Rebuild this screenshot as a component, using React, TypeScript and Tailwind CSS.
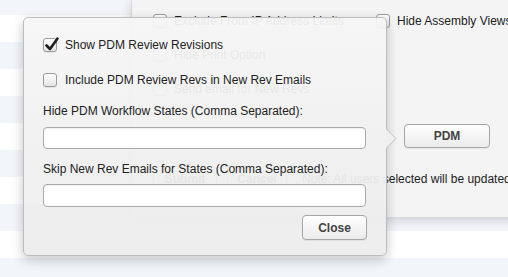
import React from 'react';

const stripes = [15, 27, 27, 27, 27, 27, 27, 27, 27, 27, 27];

function Checkbox({ checked = false }: { checked?: boolean }) {
  return (
    <span className="relative block w-[14px] h-[14px] shrink-0 rounded-[3px] border border-[#9c9c9c] bg-gradient-to-b from-white to-[#e4e4e4] shadow-[0_1px_1px_rgba(0,0,0,0.08)]">
      {checked && (
        <svg className="absolute -left-[1px] -top-[3px]" width="17" height="17" viewBox="0 0 17 17">
          <path d="M3.5 9.5 L7 13 L14.5 2.5" fill="none" stroke="#1e1e1e" strokeWidth="2.6" strokeLinecap="round" strokeLinejoin="round" />
        </svg>
      )}
    </span>
  );
}

function MacButton({ label, className }: { label: string; className: string }) {
  return (
    <div
      className={`flex items-center justify-center rounded-[4px] border border-[#a6a6a6] bg-gradient-to-b from-white to-[#ebebeb] shadow-[0_1px_1px_rgba(0,0,0,0.06)] text-[12px] font-bold text-[#444] ${className}`}
    >
      {label}
    </div>
  );
}

function BackOption({ label }: { label: string }) {
  return (
    <div className="flex items-center gap-[7px] h-[14px]">
      <Checkbox />
      <span className="text-[12px] text-[#222] whitespace-nowrap">{label}</span>
    </div>
  );
}

export default function App() {
  return (
    <div className="relative w-[508px] h-[277px] overflow-hidden bg-white font-['Liberation_Sans',Arial,sans-serif]">
      {/* page rows */}
      <div className="flex flex-col">
        {stripes.map((h, i) => (
          <div key={i} className={i % 2 === 0 ? 'bg-[#f2f6fa]' : 'bg-white'} style={{ height: h }} />
        ))}
      </div>

      {/* dialog behind */}
      <div className="absolute left-[131px] top-0 w-[420px] h-[217px] border-l border-[#d6d6d6] bg-[#f4f4f4] shadow-[0_3px_10px_rgba(0,0,0,0.16)] pl-[21px] pt-[14px]">
        <div className="grid grid-cols-[223px_200px] gap-y-[20px]">
          <BackOption label="Exclude From IP Address Limits" />
          <BackOption label="Hide Assembly Views" />
          <BackOption label="Hide Print Option" />
          <div />
          <BackOption label="Send email for New Revs" />
          <div />
        </div>
        <div className="grid grid-cols-[223px_200px] mt-[28px]">
          <div />
          <MacButton label="PDM" className="ml-[28px] w-[86px] h-[24px]" />
        </div>
        <div className="flex items-center mt-[18px] h-[26px]">
          <MacButton label="Submit" className="w-[64px] h-[26px]" />
          <MacButton label="Cancel" className="ml-[10px] w-[60px] h-[26px]" />
          <span className="ml-[15px] text-[12px] text-[#222] whitespace-nowrap">Note: All users selected will be updated</span>
        </div>
      </div>

      {/* popover */}
      <div className="absolute left-[23px] top-[17px] w-[364px] h-[239px] rounded-[5px] border border-[#bdbdbd] bg-gradient-to-b from-[#f6f6f6]/[0.94] to-[#ececec]/[0.94] shadow-[0_4px_12px_rgba(0,0,0,0.22)] pl-[19px] pt-[20px] text-[12px] text-[#222]">
        <svg className="absolute left-[362px] top-[110px]" width="12" height="21" viewBox="0 0 12 21">
          <path d="M0 0.5 L10 10.5 L0 20.5 Z" fill="#efefef" fillOpacity="0.96" />
          <path d="M0 0.5 L10 10.5 L0 20.5" fill="none" stroke="#bdbdbd" strokeWidth="1" />
        </svg>
        <div className="flex items-center gap-[8px] h-[14px]">
          <Checkbox checked />
          <span>Show PDM Review Revisions</span>
        </div>
        <div className="flex items-center gap-[8px] h-[14px] mt-[21px]">
          <Checkbox />
          <span>Include PDM Review Revs in New Rev Emails</span>
        </div>
        <div className="h-[16px] leading-[16px] mt-[16px]">Hide PDM Workflow States (Comma Separated):</div>
        <div className="w-[323px] h-[22px] mt-[8px] rounded-[4px] border border-[#a9a9a9] bg-white shadow-[inset_0_1px_1px_rgba(0,0,0,0.06)]" />
        <div className="h-[16px] leading-[16px] mt-[12px]">Skip New Rev Emails for States (Comma Separated):</div>
        <div className="w-[323px] h-[23px] mt-[7px] rounded-[4px] border border-[#a9a9a9] bg-white shadow-[inset_0_1px_1px_rgba(0,0,0,0.06)]" />
        <div className="flex justify-end w-[324px] mt-[8px]">
          <MacButton label="Close" className="w-[65px] h-[25px]" />
        </div>
      </div>
    </div>
  );
}
